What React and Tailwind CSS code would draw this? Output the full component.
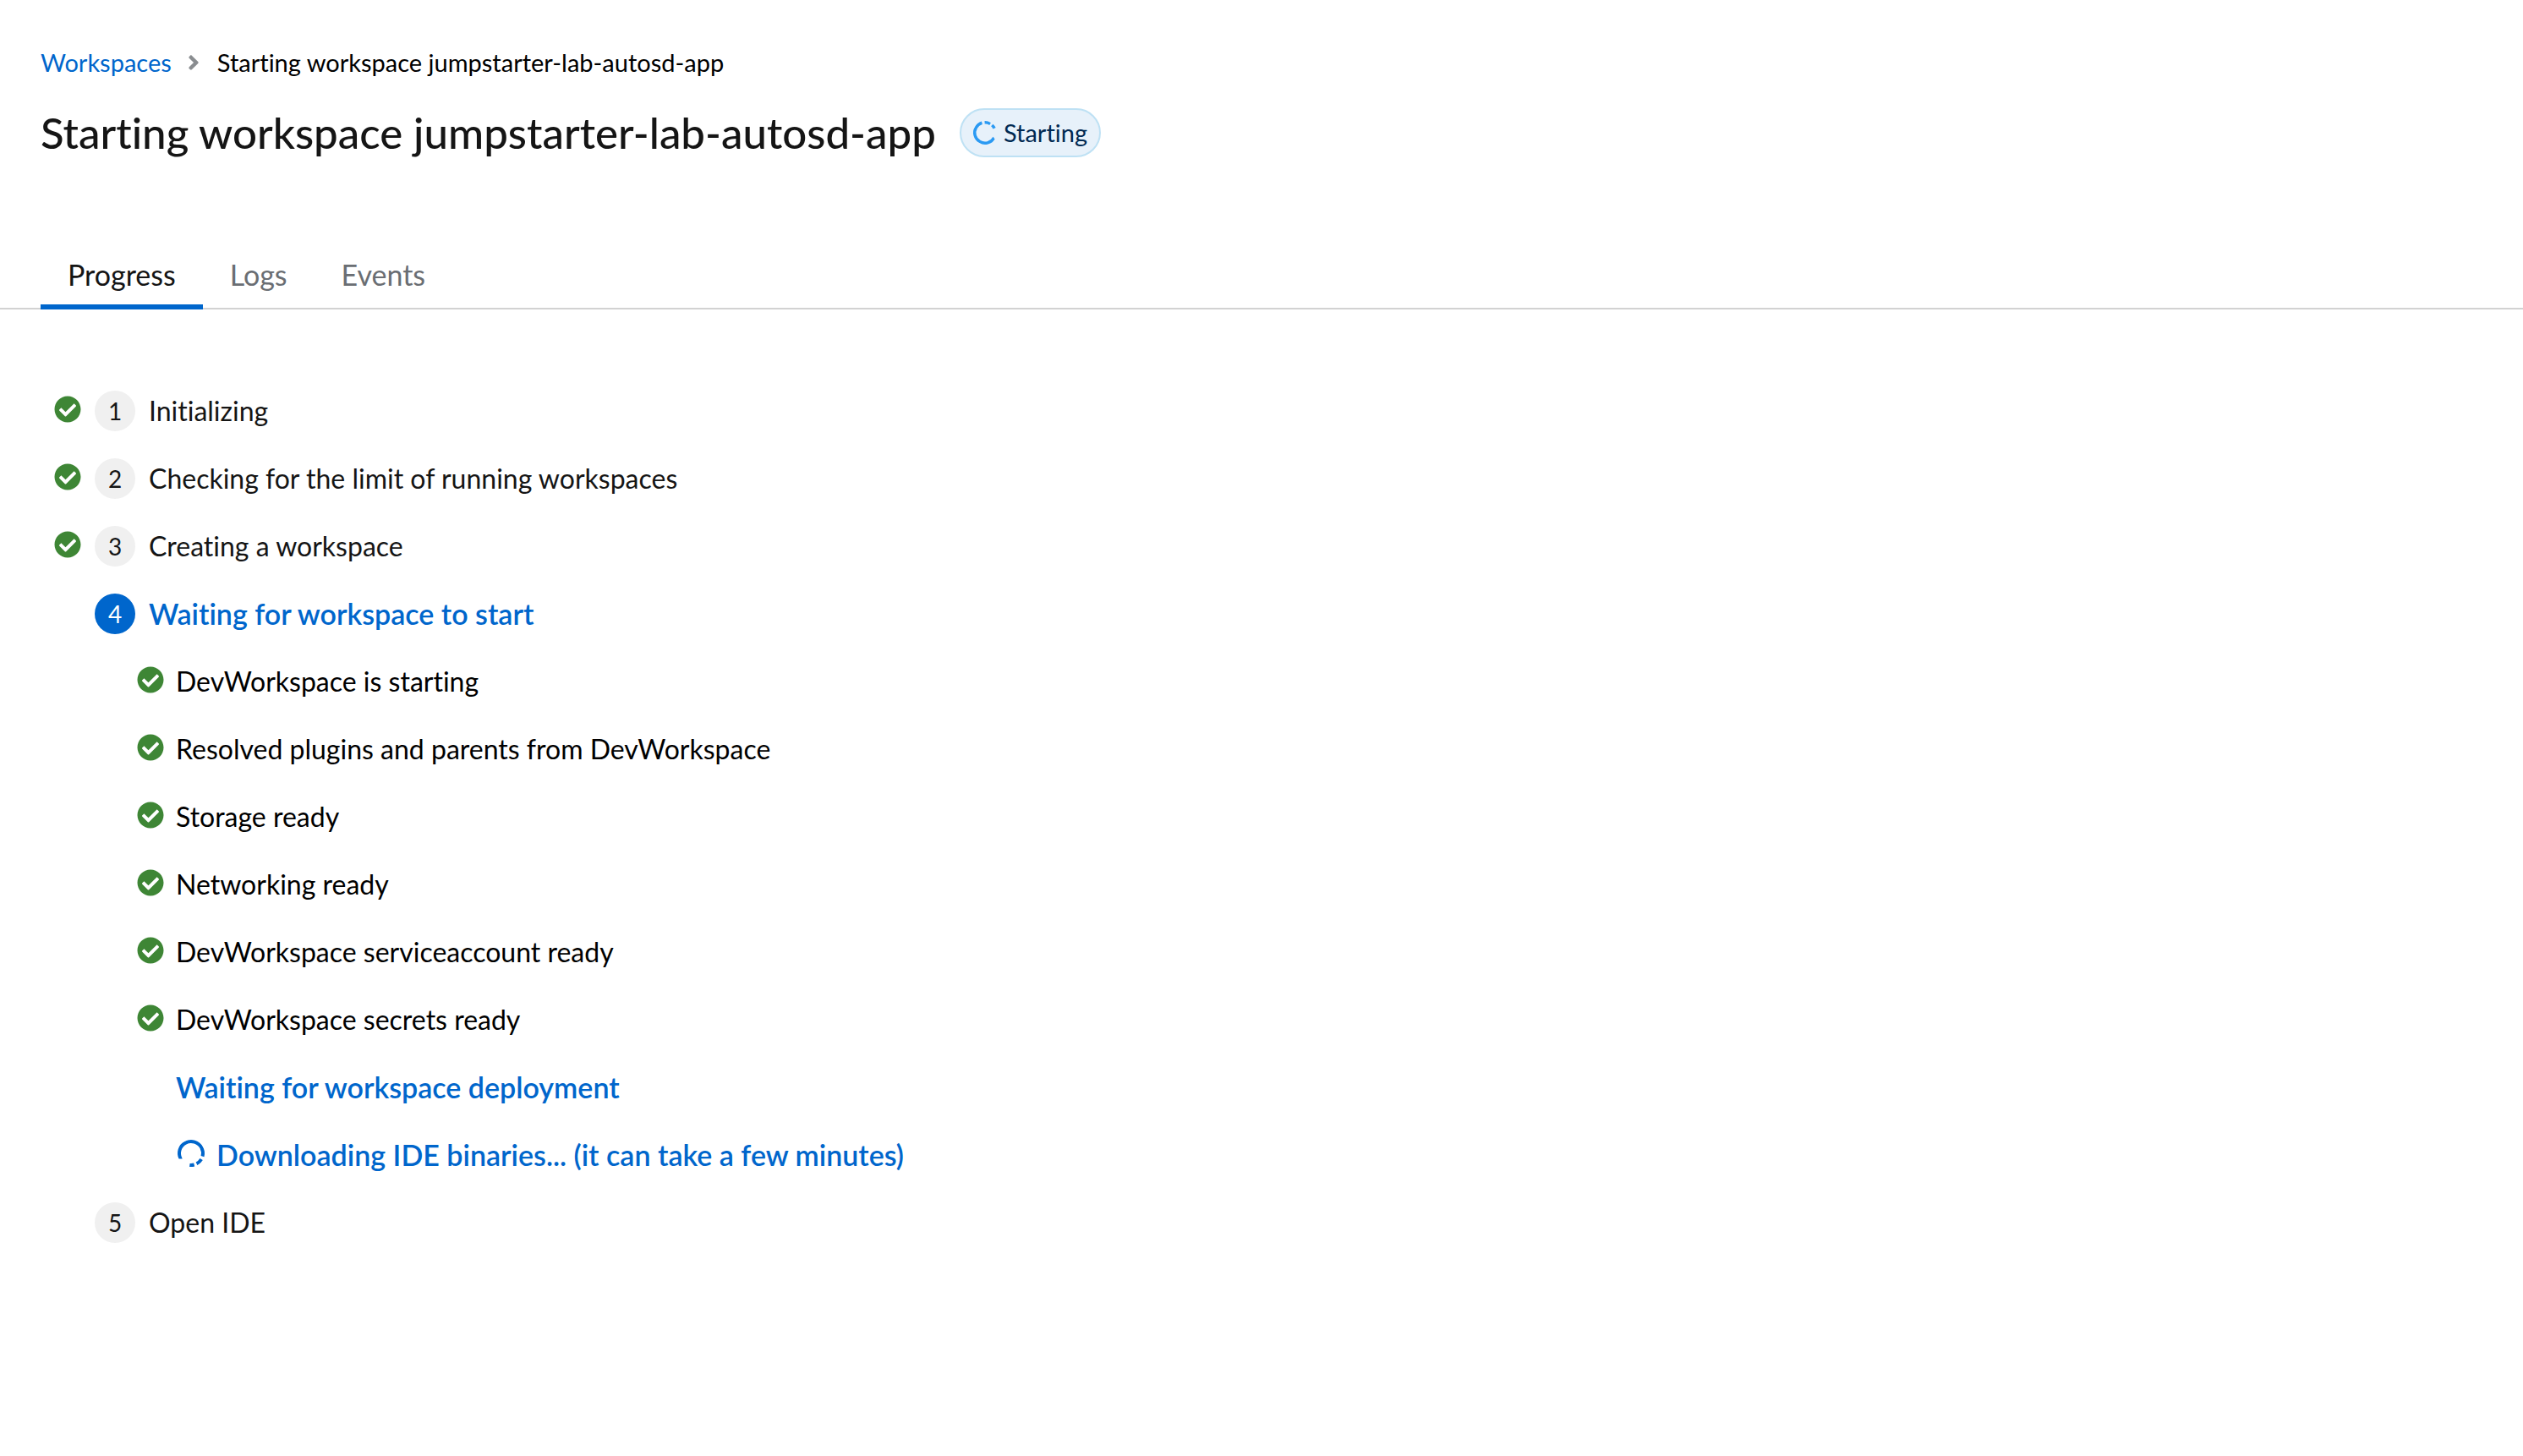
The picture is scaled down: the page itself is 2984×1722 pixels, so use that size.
import { FaAngleRight, FaCheckCircle } from "react-icons/fa";

const NAME = "Starting workspace jumpstarter-lab-autosd-app";

const TABS = [
  { label: "Progress", selected: true },
  { label: "Logs" },
  { label: "Events" },
];

const STEPS = [
  { label: "Initializing", done: true },
  { label: "Checking for the limit of running workspaces", done: true },
  { label: "Creating a workspace", done: true },
  {
    label: "Waiting for workspace to start",
    current: true,
    children: [
      { label: "DevWorkspace is starting", done: true },
      { label: "Resolved plugins and parents from DevWorkspace", done: true },
      { label: "Storage ready", done: true },
      { label: "Networking ready", done: true },
      { label: "DevWorkspace serviceaccount ready", done: true },
      { label: "DevWorkspace secrets ready", done: true },
      { label: "Waiting for workspace deployment", current: true },
      {
        label: "Downloading IDE binaries... (it can take a few minutes)",
        current: true,
        loading: true,
      },
    ],
  },
  { label: "Open IDE" },
];

// Broken ring: one long arc followed by two shorter dashes.
function InProgressIcon({ className }) {
  return (
    <svg viewBox="0 0 32 32" className={className} fill="none" aria-hidden="true">
      <circle
        cx="16"
        cy="16"
        r="14"
        stroke="currentColor"
        strokeWidth="4"
        pathLength="360"
        strokeDasharray="223 15 32 13 22 55"
      />
    </svg>
  );
}

function StatusIcon({ done, loading }) {
  return (
    <span className="mb-1 size-8 shrink-0">
      {done && <FaCheckCircle className="size-8 text-[#3e8635]" aria-label="Done" />}
      {loading && <InProgressIcon className="size-8 rotate-[152deg] text-[#0066cc]" />}
    </span>
  );
}

function SubStep({ label, done, current, loading }) {
  return (
    <li className={`flex h-20 items-center gap-3.5 ${loading ? "pl-12" : ""}`}>
      <StatusIcon done={done} loading={loading} />
      <span
        className={
          current
            ? "text-[34px] leading-10 font-semibold text-[#0066cc]"
            : "text-[32px] leading-10 text-black"
        }
      >
        {label}
      </span>
    </li>
  );
}

function Step({ number, label, done, current, children }) {
  return (
    <li>
      <div className="flex h-20 items-center gap-4">
        <StatusIcon done={done} />
        <span
          className={`flex size-12 shrink-0 items-center justify-center rounded-full text-[28px] leading-none ${
            current ? "bg-[#0066cc] text-white" : "bg-[#f0f0f0] text-[#151515]"
          }`}
        >
          {number}
        </span>
        <span
          className={
            current
              ? "text-[34px] leading-10 font-semibold text-[#0066cc]"
              : "text-[32px] leading-10 text-[#151515]"
          }
        >
          {label}
        </span>
      </div>
      {children && (
        <ol className="pl-[98px]">
          {children.map((child) => (
            <SubStep key={child.label} {...child} />
          ))}
        </ol>
      )}
    </li>
  );
}

export default function App() {
  return (
    <div className="min-h-screen bg-white font-['Lato',sans-serif] text-[#151515] [font-variant-ligatures:none]">
      <header className="px-12 pt-[49px]">
        <nav aria-label="Breadcrumb">
          <ol className="flex items-center text-[29px] leading-[50px]">
            <li>
              <a href="#workspaces" className="text-[#0066cc]">
                Workspaces
              </a>
            </li>
            <li className="flex items-center text-black">
              <FaAngleRight className="mr-3.5 ml-3 size-7 text-[#8a8d90]" aria-hidden="true" />
              <span aria-current="page">{NAME}</span>
            </li>
          </ol>
        </nav>
        <div className="mt-7 flex items-center gap-7">
          <h1 className="text-[51px] leading-[60px] font-medium">{NAME}</h1>
          <span className="flex items-center gap-2 rounded-full border-2 border-[#bee1f4] bg-[#e7f1fa] px-3.5 text-[29px] leading-[54px] text-[#002952]">
            <InProgressIcon className="size-7 rotate-[30deg] text-[#2b9af3]" />
            Starting
          </span>
        </div>
      </header>

      <div role="tablist" className="mt-[97px] flex px-12 shadow-[inset_0_-2px_0_#d2d2d2]">
        {TABS.map(({ label, selected }) => (
          <button
            key={label}
            type="button"
            role="tab"
            aria-selected={Boolean(selected)}
            className={`h-[82px] px-8 text-[34px] leading-10 ${
              selected ? "shadow-[inset_0_-6px_0_#0066cc]" : "text-[#6a6e73]"
            }`}
          >
            {label}
          </button>
        ))}
      </div>

      <main role="tabpanel" className="px-16 py-20">
        <ol>
          {STEPS.map((step, index) => (
            <Step key={step.label} number={index + 1} {...step} />
          ))}
        </ol>
      </main>
    </div>
  );
}
